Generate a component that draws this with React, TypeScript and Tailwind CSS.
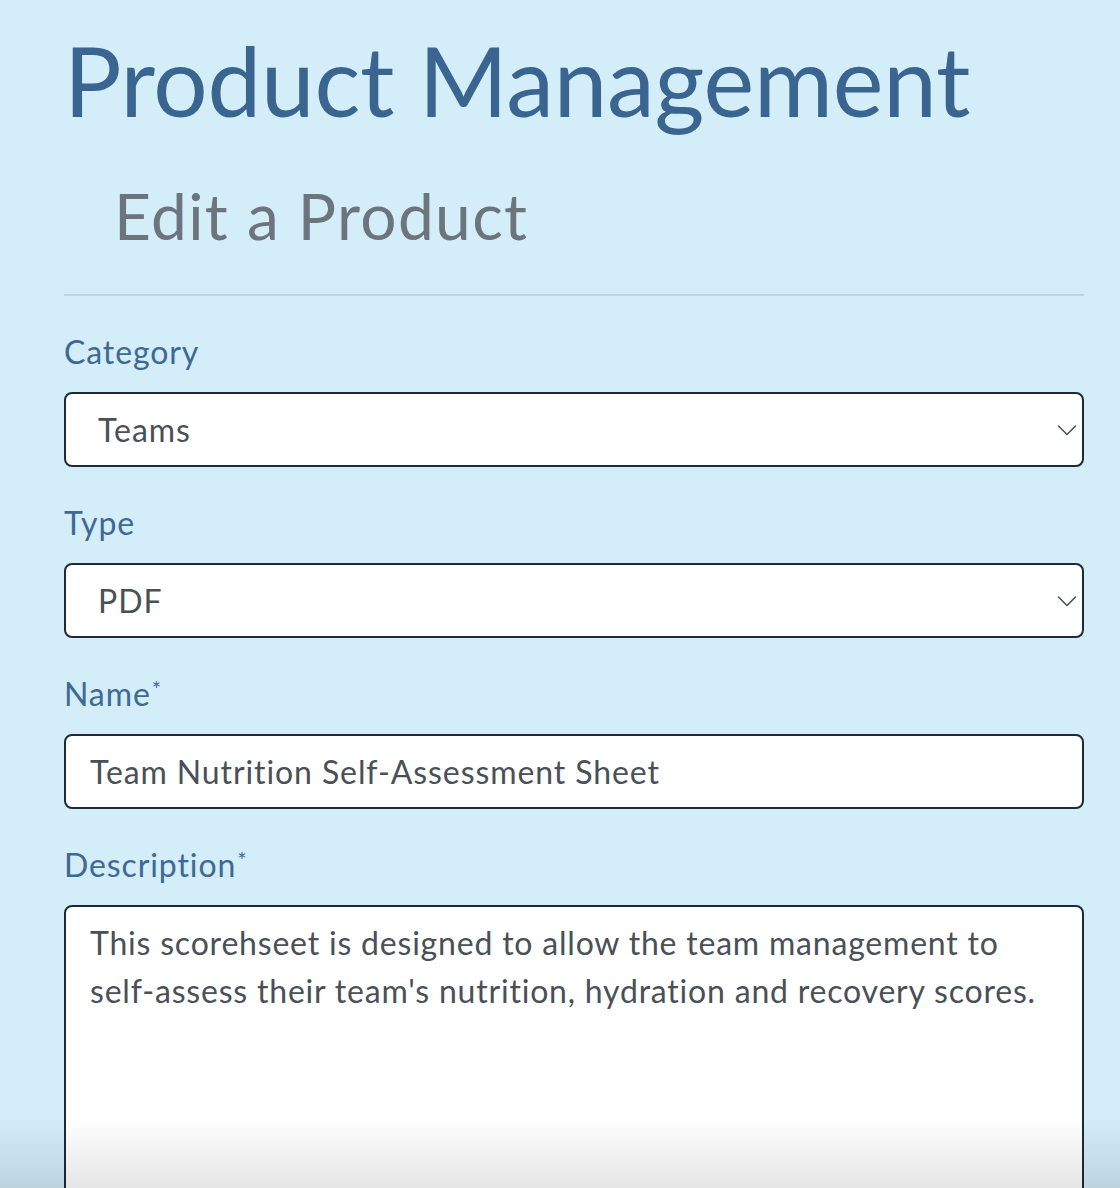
import { useState } from "react";

/* field bits ─────────────────────────────────────────────────────────────── */

function Label({ children, required }: { children: React.ReactNode; required?: boolean }) {
  return (
    <label className="mb-4 block text-[32px] leading-[48px] tracking-[0.9px] text-[#3d6994]">
      {children}
      {required && <span className="ml-px align-[9px] text-[22px] leading-none text-[#3d6994]">*</span>}
    </label>
  );
}

function Select({ value, options }: { value: string; options: string[] }) {
  const [val, setVal] = useState(value);
  return (
    <div className="relative mb-8">
      <select
        value={val}
        onChange={(e) => setVal(e.target.value)}
        className="block h-[75px] w-full appearance-none rounded-lg border-2 border-[#1e2b37] bg-white pl-8 pr-16 text-[32px] leading-[48px] tracking-[1px] text-[#495057] outline-none"
      >
        {options.map((o) => (
          <option key={o}>{o}</option>
        ))}
      </select>
      <svg
        viewBox="0 0 20 20"
        className="pointer-events-none absolute right-[7px] top-1/2 h-[20px] w-[20px] -translate-y-1/2 text-[#4b5259]"
        fill="none"
        stroke="currentColor"
        strokeWidth="1.6"
        strokeLinecap="round"
        strokeLinejoin="round"
      >
        <path d="M1.5 6 10 14.5 18.5 6" />
      </svg>
    </div>
  );
}

/* page ───────────────────────────────────────────────────────────────────── */

export default function App() {
  const [name, setName] = useState("Team Nutrition Self-Assessment Sheet");
  const [desc, setDesc] = useState(
    "This scorehseet is designed to allow the team management to self-assess their team's nutrition, hydration and recovery scores."
  );

  return (
    <div className="min-h-screen bg-[#d3edf9] pl-16 pr-9 pt-[22px] font-['Lato','Noto_Sans',sans-serif]">
      <h1 className="text-[96px] leading-[115px] tracking-[-0.2px] text-[#3a6590]">Product Management</h1>
      <h2 className="mt-[40px] pl-[50px] text-[64px] leading-[77px] tracking-[1.35px] text-[#6c757d]">Edit a Product</h2>
      <hr className="mb-8 mt-[40px] border-t-2 border-[#b9d6e6]" />

      <Label>Category</Label>
      <Select value="Teams" options={["Teams", "Individuals", "Coaches"]} />

      <Label>Type</Label>
      <Select value="PDF" options={["PDF", "Video", "Spreadsheet"]} />

      <Label required>Name</Label>
      <input
        value={name}
        onChange={(e) => setName(e.target.value)}
        className="mb-8 block h-[75px] w-full rounded-lg border-2 border-[#1e2b37] bg-white px-6 text-[32px] leading-[48px] tracking-[0.9px] text-[#495057] outline-none"
      />

      <Label required>Description</Label>
      <textarea
        value={desc}
        onChange={(e) => setDesc(e.target.value)}
        className="block h-[340px] w-full resize-none rounded-lg border-2 border-[#1e2b37] bg-white px-6 py-3 text-[32px] leading-[48px] tracking-[0.8px] text-[#495057] outline-none"
      />

      <div className="pointer-events-none fixed inset-x-0 bottom-0 h-[70px] bg-linear-to-b from-transparent to-black/10" />
    </div>
  );
}
